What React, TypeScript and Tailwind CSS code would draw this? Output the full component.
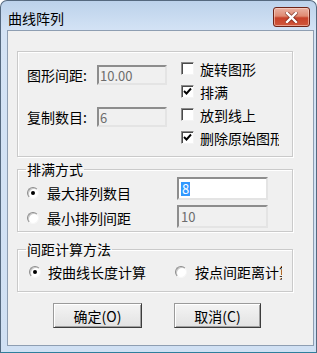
import React from "react";

function CheckBox({ checked }: { checked?: boolean }) {
  return (
    <span className="flex h-[13px] w-[13px] shrink-0 items-center justify-center border border-t-[#8a8a8a] border-l-[#8a8a8a] border-r-[#f4f4f4] border-b-[#f4f4f4] bg-white shadow-[inset_1px_1px_0_#4a4a4a]">
      {checked && (
        <svg width="9" height="9" viewBox="0 0 9 9">
          <polyline points="1,4 3.5,6.5 8,1.5" fill="none" stroke="#000" strokeWidth="1.9" />
        </svg>
      )}
    </span>
  );
}

function Radio({ on }: { on?: boolean }) {
  return (
    <span className="flex h-[12px] w-[12px] shrink-0 items-center justify-center rounded-full border border-t-[#8c8c8c] border-l-[#8c8c8c] border-r-[#f6f6f6] border-b-[#f6f6f6] bg-white shadow-[inset_1px_1px_0_#c8c8c8]">
      {on && <span className="h-[4px] w-[4px] rounded-full bg-black" />}
    </span>
  );
}

function Input({
  w,
  h,
  disabled,
  children,
}: {
  w: string;
  h: string;
  disabled?: boolean;
  children?: React.ReactNode;
}) {
  return (
    <div
      className={`${w} ${h} flex items-center border-2 border-t-[#8d8d8d] border-l-[#8d8d8d] border-r-[#e4e4e4] border-b-[#e4e4e4] pl-[1px] text-[13px] leading-[15px] ${
        disabled ? "bg-[#f0f0f0] text-[#6d6d6d]" : "bg-white text-black"
      }`}
    >
      {children}
    </div>
  );
}

function CbRow({ checked, label }: { checked?: boolean; label: string }) {
  return (
    <div className="flex h-[23px] w-[98px] items-center overflow-hidden whitespace-nowrap">
      <CheckBox checked={checked} />
      <span className="ml-[6px] text-[14px] leading-[16px]">{label}</span>
    </div>
  );
}

function Button({ w, label }: { w: string; label: string }) {
  return (
    <div
      className={`${w} flex h-[25px] items-center justify-center border border-t-[#9a9a9a] border-l-[#9a9a9a] border-r-[#3c3c3c] border-b-[#3c3c3c] bg-[linear-gradient(to_bottom,#f4f4f4,#e2e2e2)] text-[14px] leading-[16px] shadow-[inset_1px_1px_0_#ffffff,inset_-1px_-1px_0_#a0a0a0]`}
    >
      {label}
    </div>
  );
}

export default function App() {
  return (
    <div className="flex h-[353px] w-[317px] flex-col overflow-hidden rounded-t-[7px] border border-[#55697f] border-b-[#2f7f9c] bg-[linear-gradient(to_bottom,#bcd2eb_0px,#d4e3f5_30px,#d0e0f3_100%)] font-['Noto_Sans_CJK_SC',sans-serif] text-black">
      {/* Title bar */}
      <div className="flex h-[29px] shrink-0 items-start justify-between pl-[7px] pr-[6px]">
        <span className="mt-[9px] text-[14px] leading-[16px] text-black">曲线阵列</span>
        <div className="mt-[6px] flex h-[20px] w-[37px] items-center justify-center rounded-[3px] border border-[#6e2418] bg-[linear-gradient(to_bottom,#eab2a3_0%,#df8a72_45%,#c8422a_55%,#d0583c_100%)] shadow-[inset_0_0_0_1px_rgba(255,220,210,0.55)]">
          <svg width="13" height="11" viewBox="0 0 13 11">
            <path
              d="M2 1 L11 10 M11 1 L2 10"
              stroke="#5b1a10"
              strokeWidth="4"
              strokeLinecap="square"
              opacity="0.6"
            />
            <path
              d="M2 1 L11 10 M11 1 L2 10"
              stroke="#ffffff"
              strokeWidth="2.4"
              strokeLinecap="square"
            />
          </svg>
        </div>
      </div>

      {/* Client area */}
      <div className="ml-[6px] mr-[2px] flex h-[316px] shrink-0 flex-col border border-[#8e9eb2] bg-[#f0f0f0] pl-[9px] pt-[20px]">
        {/* Group 1 */}
        <div className="flex h-[106px] w-[276px] shrink-0 border border-[#cacaca] shadow-[inset_1px_1px_0_#ffffff,1px_1px_0_#ffffff]">
          <div className="flex w-[149px] flex-col gap-[22px] pl-[9px] pt-[13px]">
            <div className="flex h-[20px] items-center">
              <span className="w-[70px] text-[14px] leading-[16px]">图形间距:</span>
              <Input w="w-[70px]" h="h-[20px]" disabled>
                10.00
              </Input>
            </div>
            <div className="flex h-[20px] items-center">
              <span className="w-[70px] text-[14px] leading-[16px]">复制数目:</span>
              <Input w="w-[70px]" h="h-[20px]" disabled>
                6
              </Input>
            </div>
          </div>
          <div className="ml-[14px] flex flex-col pt-[5px]">
            <CbRow label="旋转图形" />
            <CbRow checked label="排满" />
            <CbRow label="放到线上" />
            <CbRow checked label="删除原始图形" />
          </div>
        </div>

        {/* Group 2 */}
        <fieldset className="mt-[5px] w-[276px] shrink-0 border border-[#cacaca] pb-[1px] shadow-[inset_1px_1px_0_#ffffff,1px_1px_0_#ffffff]">
          <legend className="ml-[8px] px-[1px] text-[14px] leading-[15px]">排满方式</legend>
          <div className="flex">
            <div className="flex w-[159px] flex-col pl-[9px] pt-[3px]">
              <div className="flex h-[25px] items-center">
                <Radio on />
                <span className="ml-[8px] text-[14px] leading-[16px]">最大排列数目</span>
              </div>
              <div className="flex h-[25px] items-center">
                <Radio />
                <span className="ml-[8px] text-[14px] leading-[16px]">最小排列间距</span>
              </div>
            </div>
            <div className="flex flex-col gap-[5px]">
              <Input w="w-[91px]" h="h-[23px]">
                <span className="ml-[1px] bg-[#3399ff] px-[1px] leading-[14px] text-white">8</span>
              </Input>
              <Input w="w-[91px]" h="h-[23px]" disabled>
                <span className="ml-[1px]">10</span>
              </Input>
            </div>
          </div>
        </fieldset>

        {/* Group 3 */}
        <fieldset className="mt-[10px] w-[276px] shrink-0 border border-[#cacaca] pb-[9px] pl-[11px] pt-[5px] shadow-[inset_1px_1px_0_#ffffff,1px_1px_0_#ffffff]">
          <legend className="-ml-[3px] px-[1px] text-[14px] leading-[15px]">间距计算方法</legend>
          <div className="flex h-[20px] items-center">
            <Radio on />
            <span className="ml-[7px] w-[98px] whitespace-nowrap text-[14px] leading-[16px]">按曲线长度计算</span>
            <span className="ml-[29px]">
              <Radio />
            </span>
            <span className="ml-[8px] w-[87px] overflow-hidden whitespace-nowrap text-[14px] leading-[16px]">
              按点间距离计算
            </span>
          </div>
        </fieldset>

        {/* Buttons */}
        <div className="mt-[11px] flex">
          <div className="ml-[36px]">
            <Button w="w-[89px]" label="确定(O)" />
          </div>
          <div className="ml-[32px]">
            <Button w="w-[87px]" label="取消(C)" />
          </div>
        </div>
      </div>
    </div>
  );
}
